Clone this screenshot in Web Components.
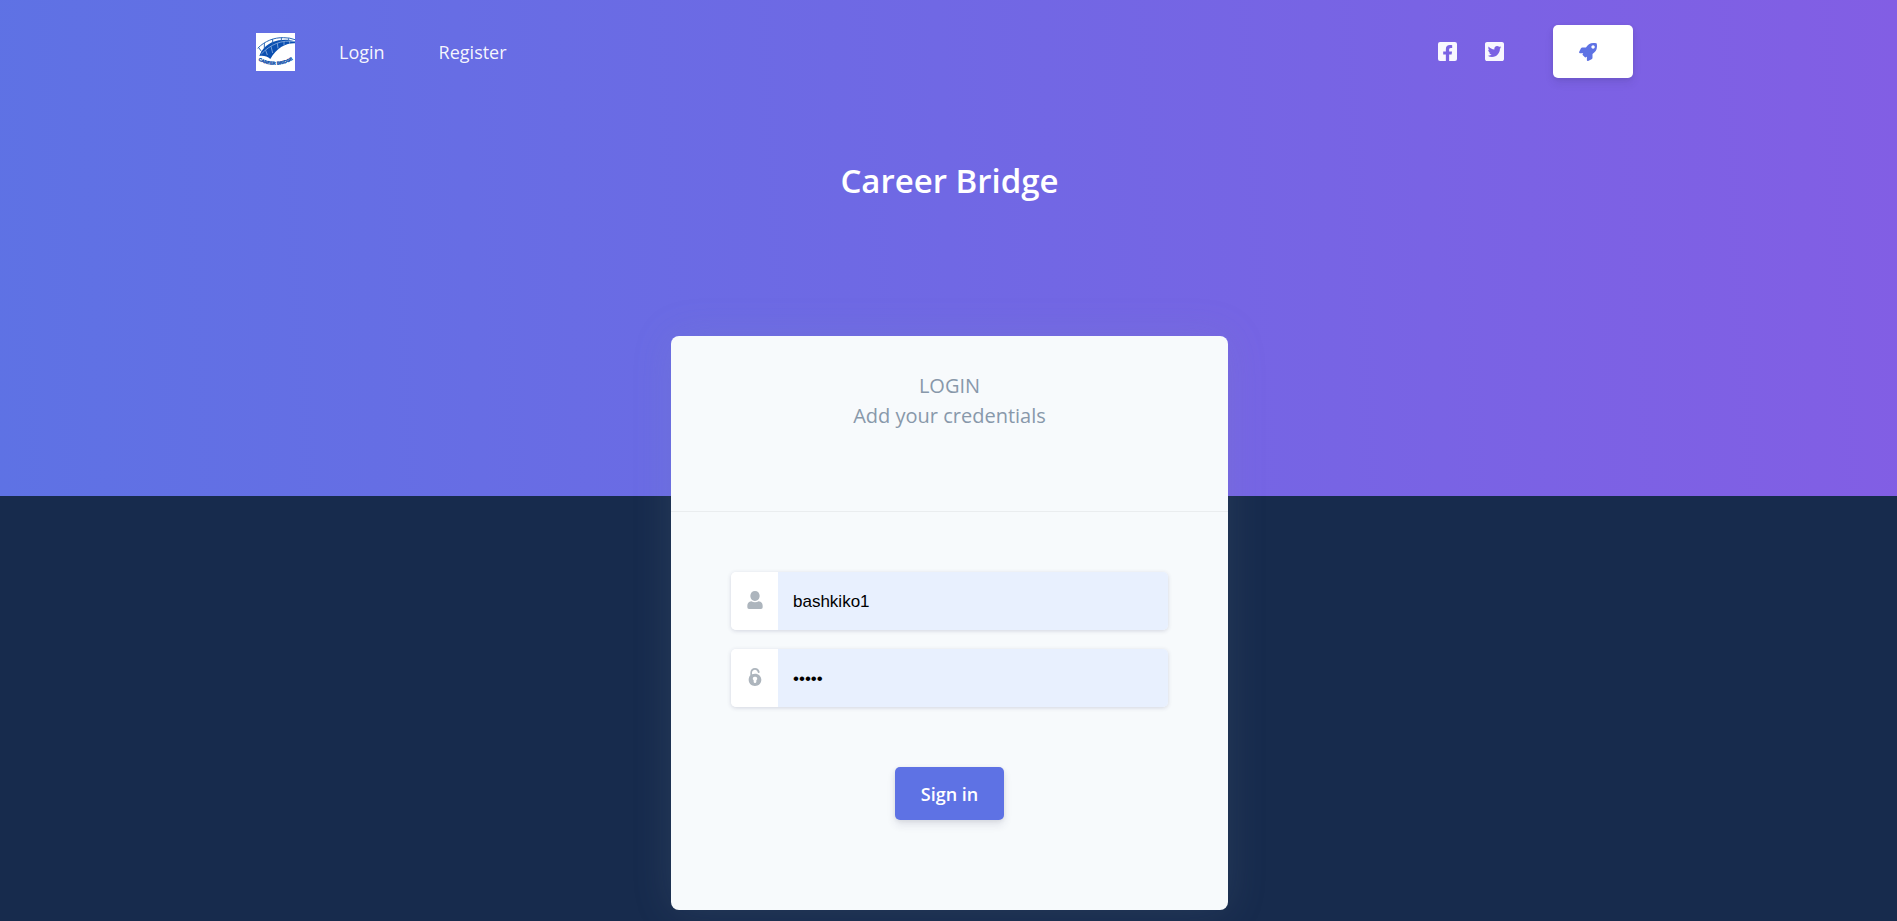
<!DOCTYPE html>
<html lang="en">
<head>
<meta charset="utf-8">
<meta name="viewport" content="width=device-width, initial-scale=1">
<title>Career Bridge</title>
<style>
  html { background: #172b4d; }
  body { margin: 0; font: 20px/30px "Open Sans", "Noto Sans", sans-serif; color: #8898aa; }
</style>
</head>
<body>
<login-page></login-page>

<script>
const define = (name, html, setup) => {
  const template = document.createElement('template');
  template.innerHTML = html;
  customElements.define(name, class extends HTMLElement {
    constructor() {
      super();
      this.attachShadow({ mode: 'open' }).append(template.content.cloneNode(true));
    }
    connectedCallback() {
      if (setup) setup(this, this.shadowRoot);
    }
  });
};

const ICONS = {
  facebook: ['0 32 448 448', 'M400 32H48A48 48 0 0 0 0 80v352a48 48 0 0 0 48 48h137.25V327.69h-63V256h63v-54.64c0-62.15 37-96.48 93.67-96.48 27.14 0 55.52 4.84 55.52 4.84v61h-31.27c-30.81 0-40.42 19.12-40.42 38.73V256h68.78l-11 71.69h-57.78V480H400a48 48 0 0 0 48-48V80a48 48 0 0 0-48-48z'],
  twitter: ['0 32 448 448', 'M400 32H48C21.5 32 0 53.5 0 80v352c0 26.5 21.5 48 48 48h352c26.5 0 48-21.5 48-48V80c0-26.5-21.5-48-48-48zm-48.9 158.8c.2 2.8.2 5.7.2 8.5 0 86.7-66 186.6-186.6 186.6-37.2 0-71.7-10.8-100.7-29.4 5.3.6 10.4.8 15.8.8 30.7 0 58.9-10.4 81.4-28-28.8-.6-53-19.5-61.3-45.5 10.1 1.5 19.2 1.5 29.6-1.2-30-6.1-52.5-32.5-52.5-64.4v-.8c8.7 4.9 18.9 7.9 29.6 8.3a65.447 65.447 0 0 1-29.2-54.6c0-12.2 3.2-23.4 8.9-33.1 32.3 39.8 80.8 65.8 135.2 68.6-9.3-44.5 24-80.6 64-80.6 18.9 0 35.9 7.9 47.9 20.7 14.8-2.8 29-8.3 41.6-15.8-4.9 15.2-15.2 28-28.8 36.1 13.2-1.4 26-5.1 37.8-10.2-8.9 13.1-20.1 24.7-32.9 34z'],
  rocket: ['0 0 512 512', 'M505.1 19.1C503.8 13 499 8.2 492.9 6.9 460.7 0 435.5 0 410.4 0 307.2 0 245.3 55.2 199.1 128H94.9c-18.2 0-34.8 10.3-42.9 26.5L2.6 253.3c-8 16 3.6 34.7 21.5 34.7h95.1c-5.9 12.8-11.9 25.5-18 37.7-3.1 6.2-1.9 13.6 3 18.5l63.6 63.6c4.9 4.9 12.3 6.1 18.5 3 12.2-6.1 24.9-12 37.7-17.9V488c0 17.8 18.8 29.4 34.7 21.5l98.7-49.4c16.3-8.1 26.5-24.8 26.5-42.9V312.8c72.6-46.3 128-108.4 128-211.1.1-25.2.1-50.4-6.8-82.6zM400 160c-26.5 0-48-21.5-48-48s21.5-48 48-48 48 21.5 48 48-21.5 48-48 48z'],
  user: ['0 0 54 54', 'M27 0C35 0 41 6 41 14.500C41 23 35 30 27 30S13 23 13 14.500C13 6 19 0 27 0zM16 31C22 35 32 35 38 31C46 32 50 37 50 44V49Q50 54 45 54H9Q4 54 4 49V44C4 37 8 32 16 31z'],
  lock: ['0 0 54 54', 'M13 22V14C13 5 19 0 27 0C34 0 40 5 41 12Q41 15 38 15T35 12C34 8 31 5 27 5C22 5 18 9 18 14V19Q23 17 27 17C38 17 46 25 46 35.500S38 54 27 54S8 46 8 35.500C8 30 10 25 13 22zM27 26A6 6 0 0 0 23 37V41Q23 45 27 45T31 41V37A6 6 0 0 0 27 26z']
};

define('ui-icon', `
  <style>
    :host { display: inline-flex; width: 18px; height: 18px; }
    svg { width: 100%; height: 100%; fill: currentColor; fill-rule: evenodd; }
  </style>
  <svg aria-hidden="true"><path/></svg>`,
  (host, root) => {
    const [box, d] = ICONS[host.getAttribute('name')];
    root.querySelector('svg').setAttribute('viewBox', box);
    root.querySelector('path').setAttribute('d', d);
  });

define('brand-logo', `
  <style>
    :host, a { display: block; }
    svg { display: block; width: 39px; height: 38px; background: #fff; }
    text { font: bold 13px "Liberation Sans", Arial, sans-serif; fill: #0a4da8; stroke: #0a4da8; }
  </style>
  <a href="#" aria-label="Career Bridge home">
    <svg viewBox="0 0 117 114">
      <path fill="#0a4fb0" d="M10 69C20 44 38 28 68 22C86 19 101 20 117 25V31C92 30 63 43 43 78C34 70 22 67 10 69z"/>
      <g fill="none" stroke="#2a68b5" stroke-width="3">
        <path d="M5 46C26 24 55 13 83 14Q102 14 117 20"/>
        <path d="M25 30V46M50 18V32M76 14V25M98 16V24M8 44L17 56"/>
      </g>
      <path fill="none" stroke="#a9c6ec" stroke-width="2" d="M16 63C42 35 77 19 117 26M29 52L34 66M45 40L50 60M64 31L66 46M84 26V37M101 24V33"/>
      <path id="arc" fill="none" d="M3 80Q58 112 114 78"/>
      <text text-anchor="middle"><textPath href="#arc" startOffset="50%">CAREER BRIDGE</textPath></text>
    </svg>
  </a>`);

define('nav-link', `
  <style>
    :host { display: block; }
    a { display: flex; align-items: center; color: rgba(255,255,255,.95); font-size: 18px; line-height: 28px; text-decoration: none; }
    ::slotted(ui-icon) { width: 19px; height: 19px; }
  </style>
  <a href="#"><slot></slot></a>`,
  (host, root) => {
    if (host.hasAttribute('label')) root.querySelector('a').setAttribute('aria-label', host.getAttribute('label'));
  });

define('ui-button', `
  <style>
    :host { display: inline-block; }
    button {
      display: flex; align-items: center; height: 53px; padding: 0 26px; border: 0; border-radius: 5px;
      background: #5e72e4; color: #fff; font: 600 18px/28px "Open Sans", sans-serif;
      box-shadow: 0 5px 8px rgba(50,50,93,.11), 0 1px 4px rgba(0,0,0,.08);
    }
    :host([variant=light]) button { background: #fff; color: #5e72e4; padding-right: 36px; }
  </style>
  <button type="button"><slot></slot></button>`,
  (host, root) => {
    if (host.hasAttribute('label')) root.querySelector('button').setAttribute('aria-label', host.getAttribute('label'));
  });

define('site-nav', `
  <style>
    :host { display: block; }
    nav { display: flex; align-items: center; max-width: 1377px; margin: 0 auto; padding: 25px 8px 0 0; }
    .links { display: flex; gap: 54px; margin-left: 44px; }
    .social { display: flex; gap: 28px; margin: 0 49px 0 auto; }
  </style>
  <nav>
    <brand-logo></brand-logo>
    <div class="links"><nav-link>Login</nav-link><nav-link>Register</nav-link></div>
    <div class="social">
      <nav-link label="Facebook"><ui-icon name="facebook"></ui-icon></nav-link>
      <nav-link label="Twitter"><ui-icon name="twitter"></ui-icon></nav-link>
    </div>
    <ui-button variant="light" label="Launch"><ui-icon name="rocket"></ui-icon></ui-button>
  </nav>`);

define('page-hero', `
  <style>
    :host { display: block; padding: 0 20px 290px; background: linear-gradient(87deg, #5e72e4, #825ee4); }
    h1 { margin: 78px 0 0; padding-left: 2px; color: #fff; font-size: 33px; line-height: 50px; font-weight: 600; text-align: center; }
  </style>
  <site-nav></site-nav>
  <h1><slot></slot></h1>`);

define('text-field', `
  <style>
    :host { display: flex; height: 58px; border-radius: 5px; overflow: hidden; box-shadow: 0 1px 4px rgba(50,50,93,.18); }
    label { display: flex; flex: none; align-items: center; justify-content: center; width: 47px; padding-bottom: 2px; box-sizing: border-box; background: #fff; color: #adb5bd; }
    input { flex: 1; min-width: 0; padding: 2px 15px 0; border: 0; outline: 0; background: #e8f0fe; color: #000; font: 17px "Liberation Sans", Arial, sans-serif; }
  </style>
  <label for="field"></label><input id="field">`,
  (host, root) => {
    const input = root.querySelector('input');
    root.querySelector('label').innerHTML = `<ui-icon name="${host.getAttribute('icon')}"></ui-icon>`;
    input.setAttribute('aria-label', host.getAttribute('label'));
    input.name = host.getAttribute('name');
    input.type = host.getAttribute('type');
    input.value = host.getAttribute('value');
  });

define('login-card', `
  <style>
    :host { display: block; box-sizing: border-box; width: 100%; max-width: 557px; border-radius: 8px; background: #f7fafc; box-shadow: 0 0 40px rgba(136,152,170,.15); }
    header { padding: 35px 20px 80px; border-bottom: 1px solid rgba(0,0,0,.05); text-align: center; }
    form { display: flex; flex-direction: column; gap: 19px; padding: 60px 60px 90px; }
    ui-button { align-self: center; margin-top: 41px; }
  </style>
  <header>LOGIN<br>Add your credentials</header>
  <form>
    <text-field name="username" icon="user" label="Username" type="text" value="bashkiko1"></text-field>
    <text-field name="password" icon="lock" label="Password" type="password" value="admin"></text-field>
    <ui-button>Sign in</ui-button>
  </form>`);

define('login-page', `
  <style>
    :host { display: block; }
    main { display: flex; justify-content: center; margin-top: -160px; padding: 0 20px 11px 22px; }
  </style>
  <page-hero>Career Bridge</page-hero>
  <main><login-card></login-card></main>`);
</script>
</body>
</html>
